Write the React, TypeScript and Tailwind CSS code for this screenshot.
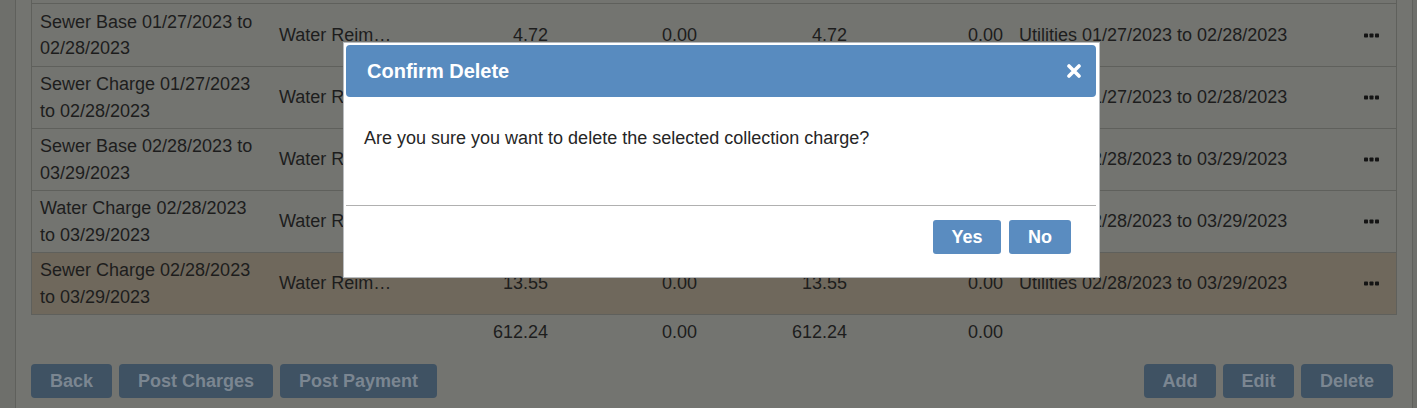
import React from 'react';

interface ChargeRow {
  description: string;
  category: string;
  amount: string;
  paid: string;
  balance: string;
  adjust: string;
  period: string;
  selected?: boolean;
}

const rows: ChargeRow[] = [
  { description: 'Sewer Base 01/27/2023 to 02/28/2023', category: 'Water Reimbursement', amount: '4.72', paid: '0.00', balance: '4.72', adjust: '0.00', period: 'Utilities 01/27/2023 to 02/28/2023' },
  { description: 'Sewer Charge 01/27/2023 to 02/28/2023', category: 'Water Reimbursement', amount: '10.12', paid: '0.00', balance: '10.12', adjust: '0.00', period: 'Utilities 01/27/2023 to 02/28/2023' },
  { description: 'Sewer Base 02/28/2023 to 03/29/2023', category: 'Water Reimbursement', amount: '4.72', paid: '0.00', balance: '4.72', adjust: '0.00', period: 'Utilities 02/28/2023 to 03/29/2023' },
  { description: 'Water Charge 02/28/2023 to 03/29/2023', category: 'Water Reimbursement', amount: '9.80', paid: '0.00', balance: '9.80', adjust: '0.00', period: 'Utilities 02/28/2023 to 03/29/2023' },
  { description: 'Sewer Charge 02/28/2023 to 03/29/2023', category: 'Water Reimbursement', amount: '13.55', paid: '0.00', balance: '13.55', adjust: '0.00', period: 'Utilities 02/28/2023 to 03/29/2023', selected: true },
];

const cols = 'grid grid-cols-[239px_132px_153px_149px_150px_156px_1fr_56px]';

function Dots() {
  return (
    <svg width="15" height="5" viewBox="0 0 15 5" fill="#141414">
      <rect x="0" y="0.5" width="4" height="4" rx="0.8" />
      <rect x="5.5" y="0.5" width="4" height="4" rx="0.8" />
      <rect x="11" y="0.5" width="4" height="4" rx="0.8" />
    </svg>
  );
}

function DimButton({ label, width }: { label: string; width: string }) {
  return (
    <button className={`${width} h-[34px] rounded-[4px] bg-[#3f5263] text-[#7b8691] text-[18px] font-bold`}>
      {label}
    </button>
  );
}

export default function App() {
  return (
    <div className="relative w-full h-[408px] overflow-hidden bg-[#6e6f6b] font-['Liberation_Sans',Arial,sans-serif] text-[18px] text-[#1d1d1d]">
      <div className="ml-[15px] mr-[4px] h-full bg-[#737470] border-x border-[#5f605c] px-[15px]">
        {/* Table */}
        <div className="border-x border-[#5f605c]">
          <div className="h-[4px] border-b border-[#5f605c]" />
          {rows.map((row, i) => (
            <div
              key={i}
              className={`${cols} ${i === 0 ? 'h-[63px]' : 'h-[62px]'} border-b border-[#5f605c] items-center ${row.selected ? 'bg-[#6f685c]' : ''}`}
            >
              <div className="px-[8px] leading-[26.5px]">{row.description}</div>
              <div className="px-[8px] truncate">{row.category}</div>
              <div className="px-[8px] text-right">{row.amount}</div>
              <div className="px-[8px] text-right">{row.paid}</div>
              <div className="px-[8px] text-right">{row.balance}</div>
              <div className="px-[8px] text-right">{row.adjust}</div>
              <div className="px-[8px] whitespace-nowrap">{row.period}</div>
              <div className="flex justify-end pr-[17px]">
                <Dots />
              </div>
            </div>
          ))}
        </div>

        {/* Totals */}
        <div className={`${cols} h-[34px] items-center px-[1px]`}>
          <div />
          <div />
          <div className="px-[8px] text-right">612.24</div>
          <div className="px-[8px] text-right">0.00</div>
          <div className="px-[8px] text-right">612.24</div>
          <div className="px-[8px] text-right">0.00</div>
          <div />
          <div />
        </div>

        {/* Actions */}
        <div className="flex items-center mt-[15px] pr-[4px]">
          <div className="flex gap-[7px]">
            <DimButton label="Back" width="w-[81px]" />
            <DimButton label="Post Charges" width="w-[154px]" />
            <DimButton label="Post Payment" width="w-[157px]" />
          </div>
          <div className="ml-auto flex gap-[7px]">
            <DimButton label="Add" width="w-[72px]" />
            <DimButton label="Edit" width="w-[71px]" />
            <DimButton label="Delete" width="w-[92px]" />
          </div>
        </div>
      </div>

      {/* Confirm dialog */}
      <div className="absolute left-[343px] top-[42px] w-[757px] bg-white border border-[#b9bcbf] p-[2px] pr-[3px]">
        <div className="h-[52px] rounded-[4px] bg-[#588bbf] flex items-center pl-[21px] pr-[15px]">
          <span className="text-white text-[20px] font-bold">Confirm Delete</span>
          <svg className="ml-auto" width="14" height="14" viewBox="0 0 14 14">
            <path d="M2 2 L12 12 M12 2 L2 12" stroke="white" strokeWidth="3.6" strokeLinecap="round" />
          </svg>
        </div>
        <div className="h-[108px] pl-[18px] pt-[28px] leading-[27px] text-[#262626]">
          Are you sure you want to delete the selected collection charge?
        </div>
        <div className="border-t border-[#b0b0b0] h-[70px] flex justify-end gap-[8px] pt-[14px] pr-[25px]">
          <button className="w-[68px] h-[34px] rounded-[3px] bg-[#5a8cc0] text-white text-[18px] font-bold">Yes</button>
          <button className="w-[62px] h-[34px] rounded-[3px] bg-[#5a8cc0] text-white text-[18px] font-bold">No</button>
        </div>
      </div>
    </div>
  );
}
